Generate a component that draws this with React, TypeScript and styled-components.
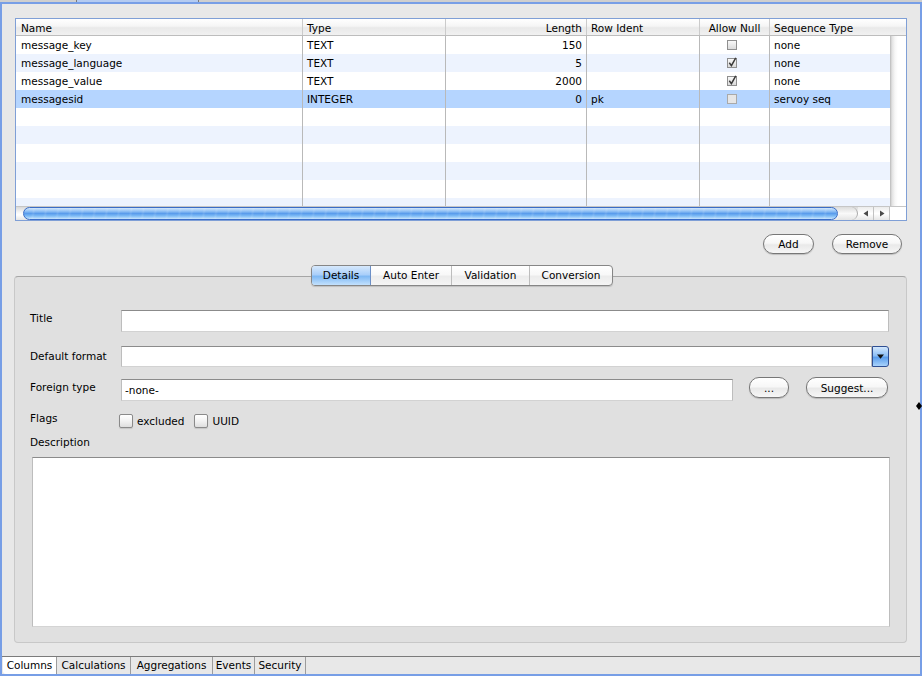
import React from 'react'
import styled, { createGlobalStyle, css } from 'styled-components'

type Align = 'left' | 'right' | 'center'

type ColumnRow = {
  name: string
  type: string
  length: string
  ident: string
  allowNull?: boolean
  seq: string
  selected?: boolean
}

const GlobalStyle = createGlobalStyle`
  html, body {
    margin: 0;
    padding: 0;
    background: #e8e8e8;
  }
  body {
    font-family: 'DejaVu Sans', 'Liberation Sans', sans-serif;
    font-size: 10.5px;
    color: #000;
  }
  * {
    box-sizing: border-box;
  }
`

const GRID = '287px 143px 141px 113px 70px 1fr'

const Window = styled.div`
  position: relative;
  width: 922px;
  height: 676px;
  display: flex;
  flex-direction: column;
  background: #e8e8e8;
  overflow: hidden;
`

const TopTabs = styled.div`
  height: 2px;
  display: flex;
  background: #cfcfcf;
`

const TopTab = styled.div<{ $width: number; $active?: boolean }>`
  width: ${({ $width }) => $width}px;
  ${({ $active }) =>
    $active &&
    css`
      background: #b4cbf1;
      border-left: 1px solid #7a7a7a;
      border-right: 1px solid #7a7a7a;
    `}
`

const Frame = styled.div`
  flex: 1;
  display: flex;
  flex-direction: column;
  border: 2px solid #779ee6;
  min-height: 0;
`

const Content = styled.div`
  flex: 1;
  display: flex;
  flex-direction: column;
  padding: 14px 13px 0 13px;
  min-height: 0;
`

/* ---------- columns table ---------- */

const Table = styled.div`
  height: 203px;
  display: flex;
  flex-direction: column;
  border: 1px solid #7f9fd6;
  background: #fff;
`

const HeaderRow = styled.div`
  height: 17px;
  display: grid;
  grid-template-columns: ${GRID};
  background: linear-gradient(#ffffff 0%, #f5f5f5 45%, #e9e9e9 55%, #f1f1f1 100%);
  border-bottom: 1px solid #bdbdbd;
`

const HeaderCell = styled.div<{ $align?: Align }>`
  padding: 1px 4px 0 4px;
  line-height: 16px;
  text-align: ${({ $align }) => $align ?? 'left'};
  border-right: 1px solid #cbcbcb;
  white-space: nowrap;
  overflow: hidden;
  &:first-child {
    padding-left: 5px;
  }
  &:last-child {
    border-right: none;
  }
`

const Body = styled.div`
  height: 170px;
  display: flex;
  overflow: hidden;
`

const Rows = styled.div`
  width: 874px;
  display: flex;
  flex-direction: column;
`

const Row = styled.div<{ $stripe: boolean; $selected?: boolean }>`
  height: 18px;
  flex: none;
  display: grid;
  grid-template-columns: ${GRID};
  background: ${({ $stripe, $selected }) =>
    $selected ? '#b5d5ff' : $stripe ? '#edf3fe' : '#ffffff'};
`

const Cell = styled.div<{ $align?: Align }>`
  display: flex;
  align-items: center;
  justify-content: ${({ $align }) =>
    $align === 'right' ? 'flex-end' : $align === 'center' ? 'center' : 'flex-start'};
  padding: 0 4px 0 4px;
  border-right: 1px solid #b9b9b9;
  white-space: nowrap;
  overflow: hidden;
  &:first-child {
    padding-left: 5px;
  }
  &:last-child {
    border-right: none;
  }
`

const Gutter = styled.div`
  width: 16px;
  background: linear-gradient(to right, #b9b9b9 0, #e2e2e2 2px, #f7f7f7 5px, #ffffff 8px);
`

const ScrollBar = styled.div`
  height: 14px;
  display: flex;
  background: linear-gradient(#d9d9d9, #f6f6f6 40%, #ffffff 60%, #e6e6e6);
  border-top: 1px solid #c6c6c6;
`

const TrackCap = styled.div<{ $width: number }>`
  width: ${({ $width }) => $width}px;
`

const Thumb = styled.div`
  flex: 1;
  border: 1px solid #3a6cc6;
  border-radius: 7px;
  background:
    repeating-linear-gradient(
      100deg,
      rgba(255, 255, 255, 0) 0,
      rgba(255, 255, 255, 0) 8px,
      rgba(255, 255, 255, 0.1) 10px,
      rgba(255, 255, 255, 0) 12px
    ),
    linear-gradient(#d2e6fc 0%, #94c3f5 28%, #5a9cec 50%, #7cbaf5 72%, #c9e5fd 100%);
`

const TrackEnd = styled.div`
  width: 20px;
  border-radius: 0 7px 7px 0;
  border-right: 1px solid #a9a9a9;
  background: linear-gradient(#dcdcdc, #f9f9f9 50%, #e4e4e4);
`

const ArrowButton = styled.div`
  width: 16px;
  display: flex;
  align-items: center;
  justify-content: center;
  border-right: 1px solid #c2c2c2;
  background: linear-gradient(#ececec, #ffffff 50%, #e6e6e6);
`

const Corner = styled.div`
  width: 16px;
  background: #fff;
`

const TableCheck = styled.span`
  display: inline-flex;
  margin-right: 5px;
`

/* ---------- buttons ---------- */

const ButtonRow = styled.div`
  display: flex;
  justify-content: flex-end;
  gap: 18px;
  margin-top: 13px;
  padding-right: 5px;
`

const PillButton = styled.button<{ $width: number }>`
  width: ${({ $width }) => $width}px;
  height: 20px;
  flex: none;
  padding: 0;
  border: 1px solid #777;
  border-radius: 10px;
  background: linear-gradient(#ffffff 0%, #f7f7f7 45%, #e9e9e9 55%, #f6f6f6 100%);
  box-shadow: 0 1px 1px rgba(0, 0, 0, 0.18);
  font: inherit;
  color: #000;
  line-height: 18px;
`

/* ---------- details group ---------- */

const GroupBox = styled.section`
  flex: 1;
  display: flex;
  flex-direction: column;
  margin: 22px 0 13px -1px;
  padding: 0 17px 15px 15px;
  background: #e0e0e0;
  border: 1px solid #c8c8c8;
  border-top-color: #a6a6a6;
  border-radius: 4px;
`

const Segmented = styled.div`
  align-self: center;
  display: flex;
  height: 21px;
  margin: -12px 0 0 5px;
  border: 1px solid #868686;
  border-radius: 4px;
  overflow: hidden;
  box-shadow: 0 1px 1px rgba(0, 0, 0, 0.15);
  background: linear-gradient(#ffffff 0%, #f8f8f8 45%, #ececec 55%, #f5f5f5 100%);
`

const Segment = styled.div<{ $width: number; $active?: boolean }>`
  width: ${({ $width }) => $width}px;
  text-align: center;
  line-height: 19px;
  border-right: 1px solid #bdbdbd;
  &:last-child {
    border-right: none;
  }
  ${({ $active }) =>
    $active &&
    css`
      border-right-color: #6c8fc6;
      background: linear-gradient(#d7e9fc 0%, #aacffa 45%, #80b9f4 55%, #c3e1fd 100%);
    `}
`

const FormRow = styled.div<{ $gap: number }>`
  display: grid;
  grid-template-columns: 91px 1fr;
  align-items: start;
  margin-top: ${({ $gap }) => $gap}px;
`

const Label = styled.div<{ $shift?: number }>`
  line-height: 16px;
  padding-top: ${({ $shift }) => $shift ?? 0}px;
  white-space: nowrap;
`

const Field = styled.input<{ $height: number }>`
  display: block;
  width: 100%;
  height: ${({ $height }) => $height}px;
  margin: 0;
  padding: 0 3px;
  border: 1px solid #bdbdbd;
  border-top-color: #8b8b8b;
  border-bottom-color: #d2d2d2;
  background: #fff;
  font: inherit;
  color: #000;
  outline: none;
`

const Combo = styled.div`
  display: flex;
  height: 21px;
`

const DropButton = styled.div`
  width: 17px;
  flex: none;
  display: flex;
  align-items: center;
  justify-content: center;
  border: 1px solid #2f4f93;
  border-radius: 0 3px 3px 0;
  background: linear-gradient(#d3e7fc 0%, #8ec0f6 45%, #5c9eec 55%, #a9d3fb 100%);
`

const ForeignLine = styled.div`
  display: flex;
  align-items: flex-start;
`

const ForeignField = styled(Field)`
  width: 612px;
  flex: none;
`

const LineButton = styled(PillButton)<{ $left: number }>`
  height: 21px;
  margin-top: -2px;
  margin-left: ${({ $left }) => $left}px;
`

const Flags = styled.div`
  display: flex;
  align-items: center;
  margin: 4px 0 0 -2px;
`

const CheckItem = styled.label`
  display: flex;
  align-items: center;
  gap: 4px;
  margin-right: 10px;
`

const CheckBox = styled.span`
  width: 14px;
  height: 14px;
  border: 1px solid #8a8a8a;
  border-radius: 2px;
  background: linear-gradient(#ffffff, #f2f2f2 50%, #dedede);
  box-shadow: 0 1px 1px rgba(0, 0, 0, 0.12);
`

const DescriptionLabel = styled(Label)`
  margin-top: 6px;
`

const DescriptionBox = styled.textarea`
  flex: 1;
  margin: 7px -1px 0 2px;
  padding: 3px;
  resize: none;
  border: 1px solid #bdbdbd;
  border-top-color: #8b8b8b;
  border-bottom-color: #d4d4d4;
  background: #fff;
  font: inherit;
  outline: none;
`

/* ---------- bottom tabs ---------- */

const BottomTabs = styled.div`
  height: 18px;
  flex: none;
  display: flex;
  border-top: 1px solid #7b7b7b;
  background: #e8e8e8;
`

const BottomTab = styled.div<{ $width: number; $active?: boolean }>`
  width: ${({ $width }) => $width}px;
  text-align: center;
  line-height: 16px;
  border-right: 1px solid #9c9c9c;
  background: ${({ $active }) => ($active ? '#ffffff' : 'transparent')};
  ${({ $active }) =>
    $active &&
    css`
      margin-left: 1px;
      border-radius: 0 0 0 3px;
    `}
`

const SplitMark = styled.svg`
  position: absolute;
  left: 916px;
  top: 402px;
`

const rows: ColumnRow[] = [
  { name: 'message_key', type: 'TEXT', length: '150', ident: '', allowNull: false, seq: 'none' },
  { name: 'message_language', type: 'TEXT', length: '5', ident: '', allowNull: true, seq: 'none' },
  { name: 'message_value', type: 'TEXT', length: '2000', ident: '', allowNull: true, seq: 'none' },
  { name: 'messagesid', type: 'INTEGER', length: '0', ident: 'pk', allowNull: false, seq: 'servoy seq', selected: true },
]

const EMPTY_ROWS = 6

const headers: { label: string; align?: Align }[] = [
  { label: 'Name' },
  { label: 'Type' },
  { label: 'Length', align: 'right' },
  { label: 'Row Ident' },
  { label: 'Allow Null', align: 'center' },
  { label: 'Sequence Type' },
]

const detailTabs = [
  { label: 'Details', width: 59, active: true },
  { label: 'Auto Enter', width: 81 },
  { label: 'Validation', width: 78 },
  { label: 'Conversion', width: 82 },
]

const tableTabs = [
  { label: 'Columns', width: 54, active: true },
  { label: 'Calculations', width: 74 },
  { label: 'Aggregations', width: 82 },
  { label: 'Events', width: 42 },
  { label: 'Security', width: 51 },
]

const NullCheck = ({ checked, dim }: { checked: boolean; dim?: boolean }) => (
  <TableCheck>
    <svg width="12" height="12" viewBox="0 0 12 12">
      <defs>
        <linearGradient id="nullbox" x1="0" y1="0" x2="0" y2="1">
          <stop offset="0" stopColor="#fafafa" />
          <stop offset="1" stopColor="#d9d9d9" />
        </linearGradient>
      </defs>
      <rect
        x="1.5"
        y="1.5"
        width="9"
        height="9"
        fill={dim ? '#e6e6e6' : 'url(#nullbox)'}
        stroke={dim ? '#a9a9a9' : '#8f8f8f'}
      />
      {checked && (
        <path d="M3.3 5.8 L5.4 8.6 L9.8 0.8" stroke="#3a3a3a" strokeWidth="1.5" fill="none" />
      )}
    </svg>
  </TableCheck>
)

const ColumnsTable = () => (
  <Table>
    <HeaderRow>
      {headers.map((h) => (
        <HeaderCell key={h.label} $align={h.align}>
          {h.label}
        </HeaderCell>
      ))}
    </HeaderRow>
    <Body>
      <Rows>
        {rows.map((r, i) => (
          <Row key={r.name} $stripe={i % 2 === 1} $selected={r.selected}>
            <Cell>{r.name}</Cell>
            <Cell>{r.type}</Cell>
            <Cell $align="right">{r.length}</Cell>
            <Cell>{r.ident}</Cell>
            <Cell $align="center">
              <NullCheck checked={!!r.allowNull} dim={r.selected} />
            </Cell>
            <Cell>{r.seq}</Cell>
          </Row>
        ))}
        {Array.from({ length: EMPTY_ROWS }).map((_, i) => (
          <Row key={`empty-${i}`} $stripe={(rows.length + i) % 2 === 1}>
            {headers.map((h) => (
              <Cell key={h.label} />
            ))}
          </Row>
        ))}
      </Rows>
      <Gutter />
    </Body>
    <ScrollBar>
      <TrackCap $width={7} />
      <Thumb />
      <TrackEnd />
      <ArrowButton>
        <svg width="6" height="7" viewBox="0 0 6 7">
          <path d="M5 0.5 L0.5 3.5 L5 6.5 Z" fill="#4a4a4a" />
        </svg>
      </ArrowButton>
      <ArrowButton>
        <svg width="6" height="7" viewBox="0 0 6 7">
          <path d="M1 0.5 L5.5 3.5 L1 6.5 Z" fill="#4a4a4a" />
        </svg>
      </ArrowButton>
      <Corner />
    </ScrollBar>
  </Table>
)

const DetailsGroup = () => (
  <GroupBox>
    <Segmented>
      {detailTabs.map((t) => (
        <Segment key={t.label} $width={t.width} $active={t.active}>
          {t.label}
        </Segment>
      ))}
    </Segmented>

    <FormRow $gap={24}>
      <Label>Title</Label>
      <Field $height={22} readOnly defaultValue="" />
    </FormRow>

    <FormRow $gap={14}>
      <Label $shift={2}>Default format</Label>
      <Combo>
        <Field $height={21} readOnly defaultValue="" />
        <DropButton>
          <svg width="7" height="5" viewBox="0 0 7 5">
            <path d="M0 0.5 H7 L3.5 4.8 Z" fill="#111" />
          </svg>
        </DropButton>
      </Combo>
    </FormRow>

    <FormRow $gap={12}>
      <Label>Foreign type</Label>
      <ForeignLine>
        <ForeignField $height={22} readOnly defaultValue="-none-" />
        <LineButton $width={40} $left={16}>...</LineButton>
        <LineButton $width={82} $left={17}>Suggest...</LineButton>
      </ForeignLine>
    </FormRow>

    <FormRow $gap={9}>
      <Label>Flags</Label>
      <Flags>
        <CheckItem>
          <CheckBox />
          excluded
        </CheckItem>
        <CheckItem>
          <CheckBox />
          UUID
        </CheckItem>
      </Flags>
    </FormRow>

    <DescriptionLabel>Description</DescriptionLabel>
    <DescriptionBox readOnly defaultValue="" />
  </GroupBox>
)

export default function App() {
  return (
    <Window>
      <GlobalStyle />
      <TopTabs>
        <TopTab $width={76} />
        <TopTab $width={123} $active />
      </TopTabs>
      <Frame>
        <Content>
          <ColumnsTable />
          <ButtonRow>
            <PillButton $width={51}>Add</PillButton>
            <PillButton $width={70}>Remove</PillButton>
          </ButtonRow>
          <DetailsGroup />
        </Content>
        <BottomTabs>
          {tableTabs.map((t) => (
            <BottomTab key={t.label} $width={t.width} $active={t.active}>
              {t.label}
            </BottomTab>
          ))}
        </BottomTabs>
      </Frame>
      <SplitMark width="6" height="8" viewBox="0 0 6 8">
        <path d="M3 0 L6 4 L3 8 L0 4 Z" fill="#000" />
      </SplitMark>
    </Window>
  )
}
